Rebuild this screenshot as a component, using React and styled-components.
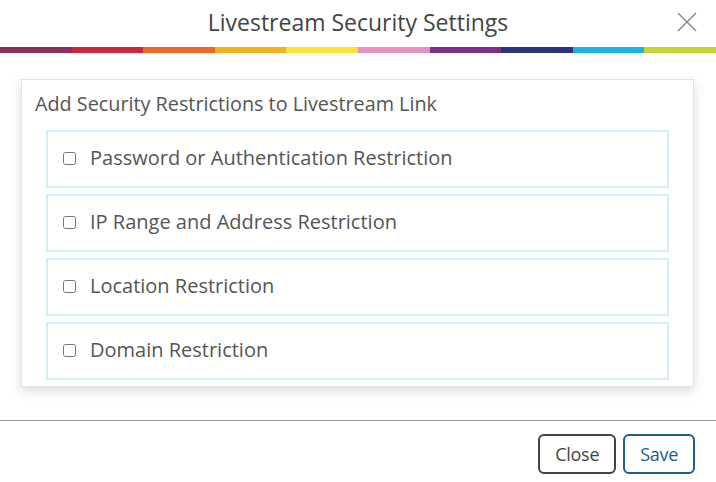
import React from "react";
import styled, { createGlobalStyle } from "styled-components";

const Global = createGlobalStyle`
  html, body { margin: 0; padding: 0; background: #fff; }
  body { font-family: "Open Sans", Lato, sans-serif; }
`;

const Modal = styled.div`
  width: 716px;
  height: 482px;
  display: flex;
  flex-direction: column;
  background: #fff;
`;

const Header = styled.div`
  height: 47px;
  box-sizing: border-box;
  padding-bottom: 4px;
  display: flex;
  align-items: center;
  justify-content: center;
  position: relative;
`;

const Title = styled.h1`
  margin: 0;
  font-size: 23px;
  font-weight: 400;
  color: #444;
  letter-spacing: 0;
`;

const CloseX = styled.button`
  position: absolute;
  right: 18px;
  top: 11px;
  width: 22px;
  height: 22px;
  padding: 0;
  border: none;
  background: none;
  cursor: pointer;
`;

const ColorBar = styled.div`
  display: flex;
  height: 6px;
`;

const Segment = styled.div`
  flex: 1;
  background: ${(p) => p.$c};
`;

const Body = styled.div`
  padding: 26px 22px 0 21px;
  height: 367px;
  box-sizing: border-box;
`;

const Card = styled.div`
  border: 1px solid #e4e4e4;
  box-shadow: 0 4px 10px rgba(0, 0, 0, 0.14);
  padding: 0 24px 6px 24px;
  background: #fff;
`;

const CardHeading = styled.h2`
  margin: 0 0 0 -11px;
  padding: 10px 0 13px;
  font-size: 19.8px;
  font-weight: 400;
  color: #555;
  line-height: 27px;
  letter-spacing: 0;
`;

const List = styled.div`
  display: flex;
  flex-direction: column;
  gap: 6px;
`;

const Row = styled.label`
  height: 58px;
  box-sizing: border-box;
  border: 2px solid #d5eef6;
  display: flex;
  align-items: center;
  padding: 0 0 3px 15px;
  gap: 14px;
  cursor: pointer;
`;

const Check = styled.input`
  margin: 2px 0 0 0;
  width: 13px;
  height: 13px;
`;

const RowText = styled.span`
  font-size: 20px;
  color: #555;
  letter-spacing: 0;
`;

const Divider = styled.div`
  height: 1px;
  background: #9a9a9a;
`;

const Footer = styled.div`
  display: flex;
  justify-content: flex-end;
  gap: 7px;
  padding: 13px 21px 0 0;
`;

const Button = styled.button`
  height: 40px;
  box-sizing: border-box;
  padding: 0 ${(p) => p.$px}px;
  background: #fff;
  border: 2px solid ${(p) => p.$c};
  color: ${(p) => p.$tc};
  border-radius: 6px;
  font-family: "Open Sans", Lato, sans-serif;
  font-size: 18px;
  letter-spacing: -0.3px;
  cursor: pointer;
`;

const colors = [
  "#8e2c5c",
  "#c9283d",
  "#e86b2c",
  "#f5b21f",
  "#fbe234",
  "#e88fbc",
  "#7e2f86",
  "#2e3381",
  "#1ab5dc",
  "#c8d435",
];

const items = [
  "Password or Authentication Restriction",
  "IP Range and Address Restriction",
  "Location Restriction",
  "Domain Restriction",
];

export default function App() {
  return (
    <Modal>
      <Global />
      <Header>
        <Title>Livestream Security Settings</Title>
        <CloseX aria-label="Close">
          <svg width="22" height="22" viewBox="0 0 22 22">
            <path d="M2 2 L20 20 M20 2 L2 20" stroke="#8a8a8a" strokeWidth="1.5" fill="none" />
          </svg>
        </CloseX>
      </Header>
      <ColorBar>
        {colors.map((c) => (
          <Segment key={c} $c={c} />
        ))}
      </ColorBar>
      <Body>
        <Card>
          <CardHeading>Add Security Restrictions to Livestream Link</CardHeading>
          <List>
            {items.map((t) => (
              <Row key={t}>
                <Check type="checkbox" />
                <RowText>{t}</RowText>
              </Row>
            ))}
          </List>
        </Card>
      </Body>
      <Divider />
      <Footer>
        <Button $c="#444" $tc="#444" $px={15}>Close</Button>
        <Button $c="#1b5e8c" $tc="#1b5e8c" $px={15}>Save</Button>
      </Footer>
    </Modal>
  );
}
